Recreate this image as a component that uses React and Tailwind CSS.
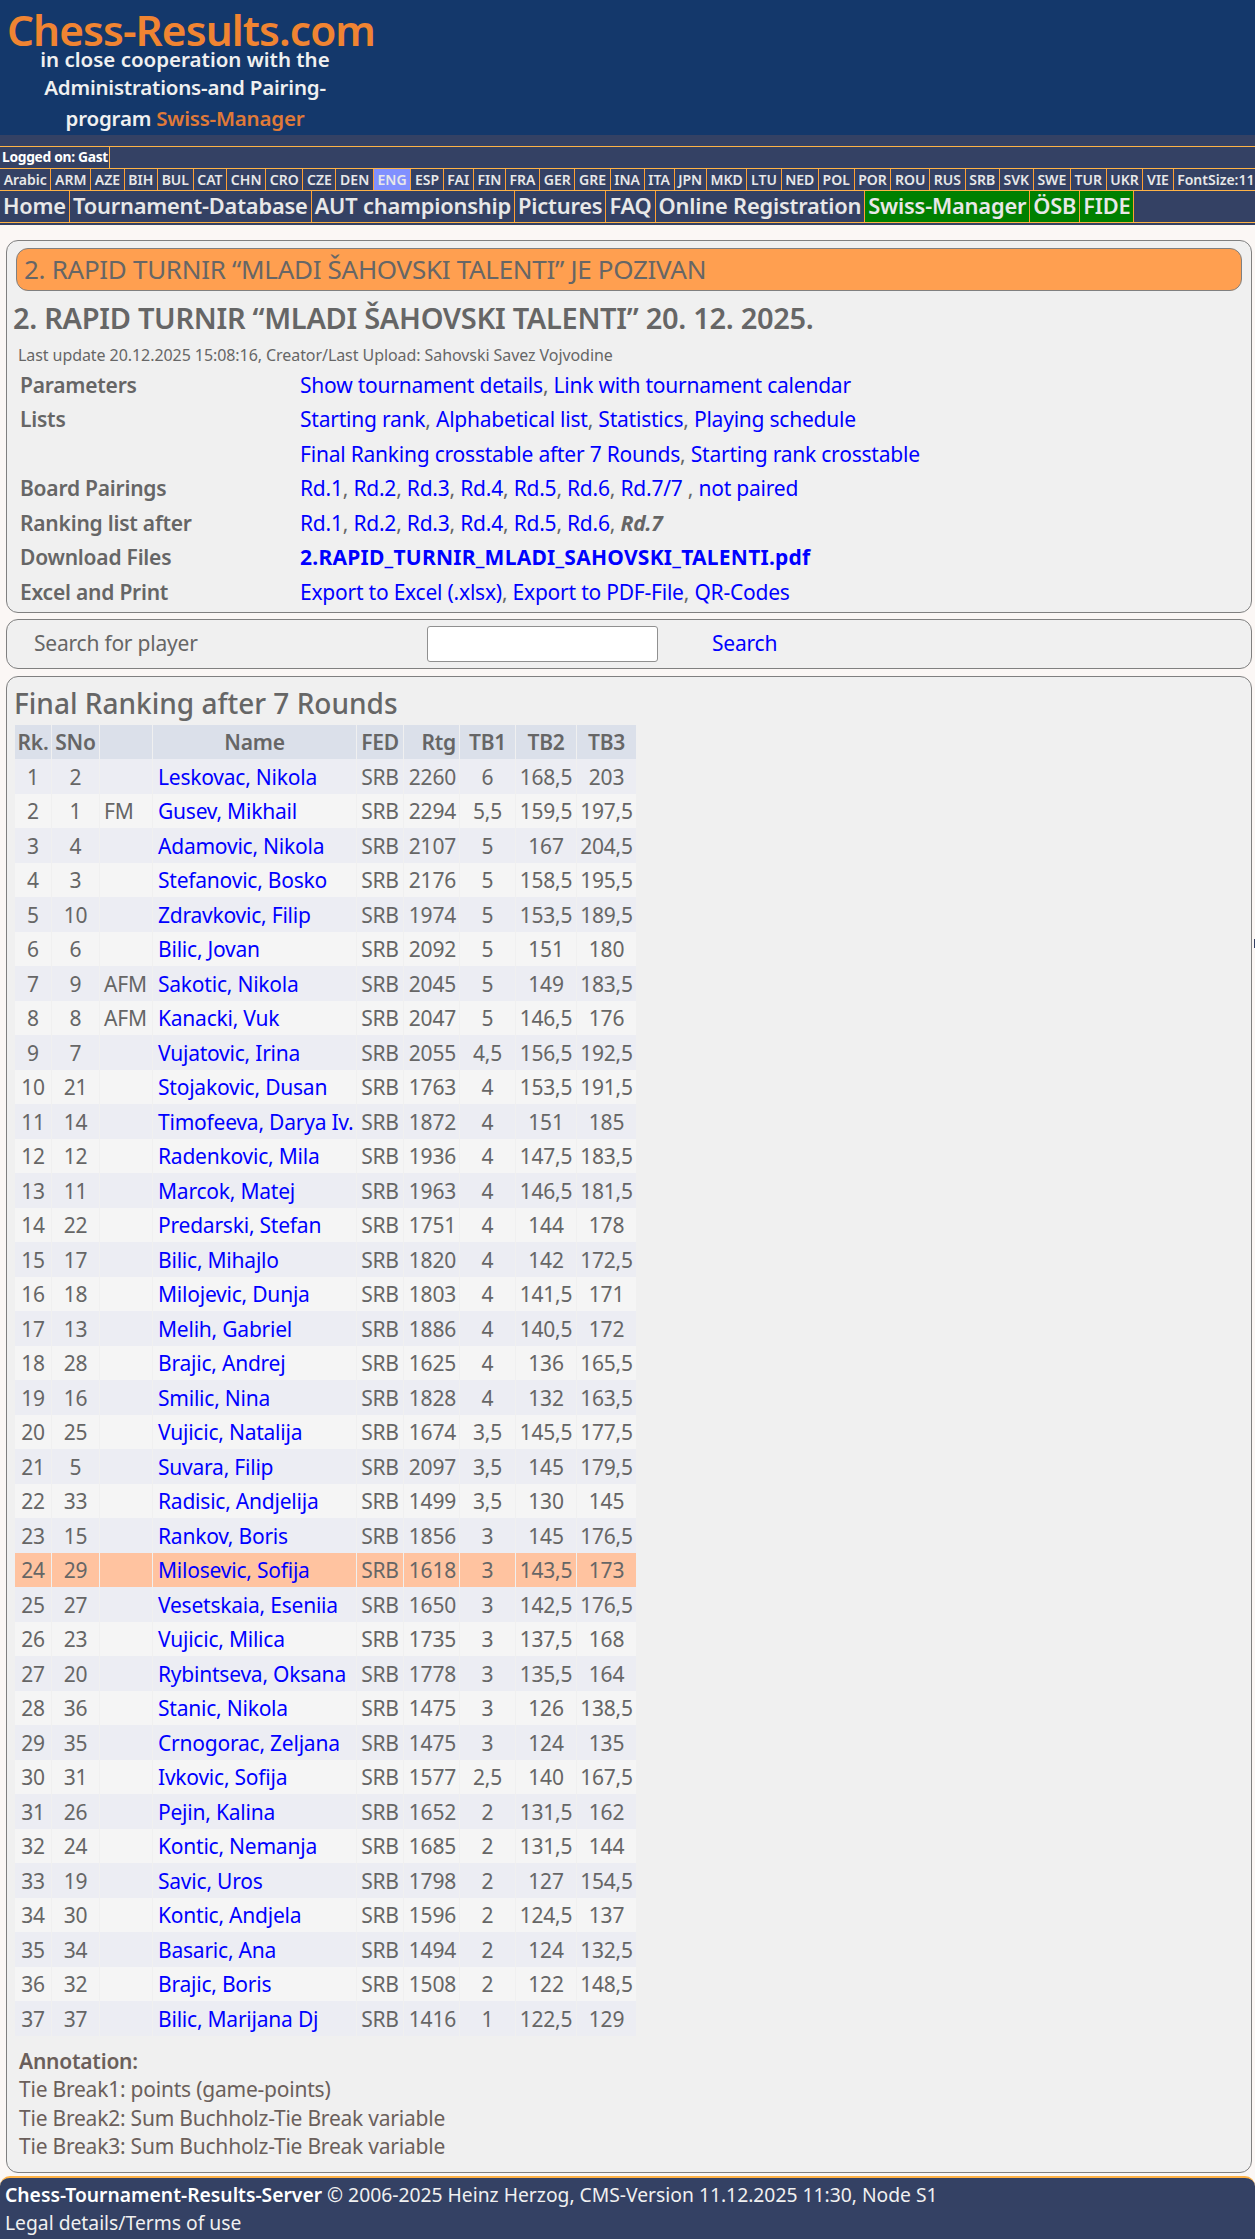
import React from 'react';

const languages = ['Arabic','ARM','AZE','BIH','BUL','CAT','CHN','CRO','CZE','DEN','ENG','ESP','FAI','FIN','FRA','GER','GRE','INA','ITA','JPN','MKD','LTU','NED','POL','POR','ROU','RUS','SRB','SVK','SWE','TUR','UKR','VIE'];
const menu = [
  { label: 'Home' }, { label: 'Tournament-Database' }, { label: 'AUT championship' }, { label: 'Pictures' }, { label: 'FAQ' }, { label: 'Online Registration' },
  { label: 'Swiss-Manager', green: true }, { label: 'ÖSB', green: true }, { label: 'FIDE', green: true },
];

const players = [
  [1,2,'','Leskovac, Nikola',2260,'6','168,5','203'],
  [2,1,'FM','Gusev, Mikhail',2294,'5,5','159,5','197,5'],
  [3,4,'','Adamovic, Nikola',2107,'5','167','204,5'],
  [4,3,'','Stefanovic, Bosko',2176,'5','158,5','195,5'],
  [5,10,'','Zdravkovic, Filip',1974,'5','153,5','189,5'],
  [6,6,'','Bilic, Jovan',2092,'5','151','180'],
  [7,9,'AFM','Sakotic, Nikola',2045,'5','149','183,5'],
  [8,8,'AFM','Kanacki, Vuk',2047,'5','146,5','176'],
  [9,7,'','Vujatovic, Irina',2055,'4,5','156,5','192,5'],
  [10,21,'','Stojakovic, Dusan',1763,'4','153,5','191,5'],
  [11,14,'','Timofeeva, Darya Iv.',1872,'4','151','185'],
  [12,12,'','Radenkovic, Mila',1936,'4','147,5','183,5'],
  [13,11,'','Marcok, Matej',1963,'4','146,5','181,5'],
  [14,22,'','Predarski, Stefan',1751,'4','144','178'],
  [15,17,'','Bilic, Mihajlo',1820,'4','142','172,5'],
  [16,18,'','Milojevic, Dunja',1803,'4','141,5','171'],
  [17,13,'','Melih, Gabriel',1886,'4','140,5','172'],
  [18,28,'','Brajic, Andrej',1625,'4','136','165,5'],
  [19,16,'','Smilic, Nina',1828,'4','132','163,5'],
  [20,25,'','Vujicic, Natalija',1674,'3,5','145,5','177,5'],
  [21,5,'','Suvara, Filip',2097,'3,5','145','179,5'],
  [22,33,'','Radisic, Andjelija',1499,'3,5','130','145'],
  [23,15,'','Rankov, Boris',1856,'3','145','176,5'],
  [24,29,'','Milosevic, Sofija',1618,'3','143,5','173'],
  [25,27,'','Vesetskaia, Eseniia',1650,'3','142,5','176,5'],
  [26,23,'','Vujicic, Milica',1735,'3','137,5','168'],
  [27,20,'','Rybintseva, Oksana',1778,'3','135,5','164'],
  [28,36,'','Stanic, Nikola',1475,'3','126','138,5'],
  [29,35,'','Crnogorac, Zeljana',1475,'3','124','135'],
  [30,31,'','Ivkovic, Sofija',1577,'2,5','140','167,5'],
  [31,26,'','Pejin, Kalina',1652,'2','131,5','162'],
  [32,24,'','Kontic, Nemanja',1685,'2','131,5','144'],
  [33,19,'','Savic, Uros',1798,'2','127','154,5'],
  [34,30,'','Kontic, Andjela',1596,'2','124,5','137'],
  [35,34,'','Basaric, Ana',1494,'2','124','132,5'],
  [36,32,'','Brajic, Boris',1508,'2','122','148,5'],
  [37,37,'','Bilic, Marijana Dj',1416,'1','122,5','129'],
];

function Links({ items }) {
  return (
    <>
      {items.map((item, i) => (
        <span key={item}>
          <a className="text-[#0000ff]">{item}</a>
          {i < items.length - 1 ? ', ' : ''}
        </span>
      ))}
    </>
  );
}

function InfoRow({ label, children }) {
  return (
    <div className="flex h-[34.5px] items-center">
      <div className="w-[286px] shrink-0 pl-[6px] font-semibold">{label}</div>
      <div>{children}</div>
    </div>
  );
}

const rounds = ['Rd.1','Rd.2','Rd.3','Rd.4','Rd.5','Rd.6'];

function App() {
  return (
    <div className="relative h-[2239px] w-[1255px] overflow-hidden bg-[#fbf7f5] font-['Noto_Sans',sans-serif] text-[21px] tracking-[-0.22px] text-[#666666]">
      {/* logo banner */}
      <div className="h-[135px] overflow-hidden bg-[#14386b]">
        <div className="w-[370px] text-center font-semibold text-[#f0f0f0]">
          <div className="whitespace-nowrap pt-[12px] pl-[7px] text-left text-[42.3px] leading-[36px] tracking-[-0.9px] text-[#f08432]">Chess-Results.com</div>
          <div className="text-[20.5px] leading-[22px] tracking-[0px]">in close cooperation with the</div>
          <div className="text-[20.5px] leading-[34px] tracking-[-0.2px]">Administrations-and Pairing-</div>
          <div className="text-[20.5px] leading-[28px] tracking-[-0.2px]">program <span className="text-[#e07a38]">Swiss-Manager</span></div>
        </div>
      </div>

      {/* nav */}
      <div className="h-[90px] bg-[#344164] pt-[11px] font-semibold text-[#e8e8e8]">
        <div className="flex h-[23px] border-y border-[#ffb347]">
          <div className="flex items-center border-r border-[#ffb347] pl-[2px] pr-[1px] text-[13.8px] font-bold tracking-[-0.3px] text-white">Logged on: Gast</div>
        </div>
        <div className="flex h-[22px] overflow-hidden whitespace-nowrap border-b border-[#ffb347] text-[14px] tracking-[0px]">
          {languages.map((l) => (
            <div key={l} className={`flex items-center border-r border-[#ffa033] px-[3.65px] ${l === 'ENG' ? 'bg-[#8090ff]' : ''}`}>{l}</div>
          ))}
          <div className="flex items-center px-[3.65px]">FontSize:11p</div>
        </div>
        <div className="flex h-[32px] border-b border-[#ffb347] whitespace-nowrap text-[21.85px] tracking-[-0.2px]">
          {menu.map((m) => (
            <div key={m.label} className={`flex items-center border-r border-[#ffa033] px-[3px] ${m.green ? 'bg-[#008000]' : ''}`}>{m.label}</div>
          ))}
        </div>
      </div>

      {/* tournament box */}
      <div className="ml-[6px] mr-[3px] mt-[15px] h-[373px] rounded-[12px] border border-[#808080] bg-[#f0f0f0] px-[7px] pt-[7px]">
        <div className="mx-[2px] flex h-[43px] items-center rounded-[12px] border border-[#808080] bg-[#ff9f50] pl-[7px] text-[26px] tracking-[-0.3px]">2. RAPID TURNIR “MLADI ŠAHOVSKI TALENTI” JE POZIVAN</div>
        <div className="ml-[-1px] mt-[7px] h-[40px] text-[29px] leading-[40px] font-semibold tracking-[-0.3px]">2. RAPID TURNIR “MLADI ŠAHOVSKI TALENTI” 20. 12. 2025.</div>
        <div className="ml-[4px] mt-[3px] h-[27px] text-[16px] leading-[28px] tracking-[-0.07px]">Last update 20.12.2025 15:08:16, Creator/Last Upload: Sahovski Savez Vojvodine</div>
        <InfoRow label="Parameters"><Links items={['Show tournament details','Link with tournament calendar']} /></InfoRow>
        <InfoRow label="Lists"><Links items={['Starting rank','Alphabetical list','Statistics','Playing schedule']} /></InfoRow>
        <InfoRow label=""><Links items={['Final Ranking crosstable after 7 Rounds','Starting rank crosstable']} /></InfoRow>
        <InfoRow label="Board Pairings"><Links items={[...rounds,'Rd.7/7']} /><span>{' , '}</span><a className="text-[#0000ff]">not paired</a></InfoRow>
        <InfoRow label="Ranking list after"><Links items={rounds} />, <b className="italic">Rd.7</b></InfoRow>
        <InfoRow label="Download Files"><a className="font-bold tracking-[0.25px] text-[#0000ff]">2.RAPID_TURNIR_MLADI_SAHOVSKI_TALENTI.pdf</a></InfoRow>
        <InfoRow label="Excel and Print"><Links items={['Export to Excel (.xlsx)','Export to PDF-File','QR-Codes']} /></InfoRow>
      </div>

      {/* search */}
      <div className="ml-[6px] mr-[3px] mt-[6px] flex h-[50px] items-center rounded-[12px] border border-[#808080] bg-[#f0f0f0]">
        <div className="w-[420px] shrink-0 pl-[27px]">Search for player</div>
        <input className="h-[36px] w-[231px] rounded-[3px] border border-[#909090] bg-white" />
        <a className="ml-[54px] text-[#0000ff]">Search</a>
      </div>

      {/* ranking */}
      <div className="ml-[6px] mr-[3px] mt-[7px] h-[1497px] rounded-[12px] border border-[#808080] bg-[#f0f0f0] pl-[7px]">
        <div className="h-[48px] pt-[7px] text-[28px] leading-[38px] font-medium tracking-[0px]">Final Ranking after 7 Rounds</div>
        <table className="w-[623px] table-fixed border-separate border-spacing-x-[1px] border-spacing-y-0">
          <thead>
            <tr className="h-[34px] font-semibold">
              <th className="w-[36px] bg-[#dbe0ea] pt-[2px] font-semibold">Rk.</th>
              <th className="w-[47px] bg-[#dbe0ea] pt-[2px] font-semibold">SNo</th>
              <th className="w-[52px] bg-[#dbe0ea]"></th>
              <th className="w-[203px] bg-[#dbe0ea] pt-[2px] font-semibold">Name</th>
              <th className="w-[46px] bg-[#dbe0ea] pt-[2px] font-semibold">FED</th>
              <th className="w-[55px] bg-[#dbe0ea] pr-[3px] pt-[2px] text-right font-semibold">Rtg</th>
              <th className="w-[55px] bg-[#dbe0ea] pt-[2px] font-semibold">TB1</th>
              <th className="w-[60px] bg-[#dbe0ea] pt-[2px] font-semibold">TB2</th>
              <th className="w-[59px] bg-[#dbe0ea] pt-[2px] font-semibold">TB3</th>
            </tr>
          </thead>
          <tbody>
            {players.map((p, i) => {
              const me = p[0] === 24;
              const bg = me ? 'bg-[#ffc3a0]' : i % 2 === 0 ? 'bg-[#ecedf3]' : 'bg-[#f5f5f5]';
              return (
                <tr key={p[0]} className="h-[34.5px]">
                  <td className={`${bg} pt-[2px] text-center`}>{p[0]}</td>
                  <td className={`${bg} pt-[2px] text-center`}>{p[1]}</td>
                  <td className={`${bg} pl-[4px] pt-[2px]`}>{p[2]}</td>
                  <td className={`${bg} whitespace-nowrap pl-[5px] pt-[2px]`}><a className="text-[#0000ff]">{p[3]}</a></td>
                  <td className={`${bg} pt-[2px] text-center`}>SRB</td>
                  <td className={`${bg} pr-[3px] pt-[2px] text-right`}>{p[4]}</td>
                  <td className={`${bg} pt-[2px] text-center`}>{p[5]}</td>
                  <td className={`${bg} pt-[2px] text-center`}>{p[6]}</td>
                  <td className={`${bg} pt-[2px] text-center`}>{p[7]}</td>
                </tr>
              );
            })}
          </tbody>
        </table>
        <div className="mt-[11px] pl-[5px] leading-[28.5px] text-[#6b5f5b]">
          <div className="font-semibold">Annotation:</div>
          <div>Tie Break1: points (game-points)</div>
          <div>Tie Break2: Sum Buchholz-Tie Break variable</div>
          <div>Tie Break3: Sum Buchholz-Tie Break variable</div>
        </div>
      </div>

      {/* footer */}
      <div className="mt-[3px] h-[64px] rounded-t-[10px] border-t-2 border-[#ffb347] bg-[#344164] pl-[5px] pt-[3px] text-[19.3px] leading-[28px] tracking-[0px] text-[#f0f0f0]">
        <div><b className="font-semibold text-white">Chess-Tournament-Results-Server</b> © 2006-2025 Heinz Herzog, CMS-Version 11.12.2025 11:30, Node S1</div>
        <div>Legal details/Terms of use</div>
      </div>

      <div className="absolute right-0 top-[939px] h-[9px] w-[1px] bg-[#344164]"></div>
    </div>
  );
}

export default App;
